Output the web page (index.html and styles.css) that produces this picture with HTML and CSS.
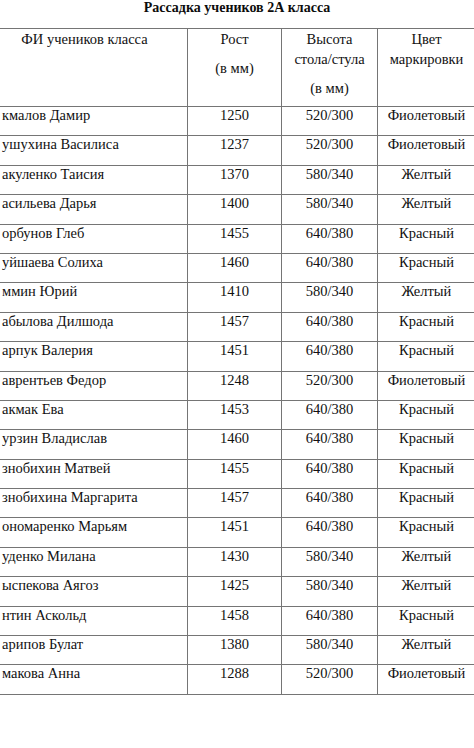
FILE: index.html
```html
<!DOCTYPE html>
<html lang="ru">
<head>
<meta charset="utf-8">
<title>Рассадка учеников 2А класса</title>
<link rel="stylesheet" href="styles.css">
</head>
<body>
<div class="page">
  <h1 class="title">Рассадка учеников 2А класса</h1>
  <table class="seating">
    <colgroup>
      <col class="c-name">
      <col class="c-height">
      <col class="c-desk">
      <col class="c-color">
    </colgroup>
    <thead>
      <tr>
        <th class="name-h"><p>ФИ учеников класса</p></th>
        <th><p>Рост</p><p class="gap">(в мм)</p></th>
        <th><p>Высота<br>стола/стула</p><p class="gap">(в мм)</p></th>
        <th><p>Цвет<br>маркировки</p></th>
      </tr>
    </thead>
    <tbody>
      <tr><td class="name">кмалов Дамир</td><td>1250</td><td>520/300</td><td>Фиолетовый</td></tr>
      <tr><td class="name">ушухина Василиса</td><td>1237</td><td>520/300</td><td>Фиолетовый</td></tr>
      <tr><td class="name">акуленко Таисия</td><td>1370</td><td>580/340</td><td>Желтый</td></tr>
      <tr><td class="name">асильева Дарья</td><td>1400</td><td>580/340</td><td>Желтый</td></tr>
      <tr><td class="name">орбунов Глеб</td><td>1455</td><td>640/380</td><td>Красный</td></tr>
      <tr><td class="name">уйшаева Солиха</td><td>1460</td><td>640/380</td><td>Красный</td></tr>
      <tr><td class="name">ммин Юрий</td><td>1410</td><td>580/340</td><td>Желтый</td></tr>
      <tr><td class="name">абылова Дилшода</td><td>1457</td><td>640/380</td><td>Красный</td></tr>
      <tr><td class="name">арпук Валерия</td><td>1451</td><td>640/380</td><td>Красный</td></tr>
      <tr><td class="name">аврентьев Федор</td><td>1248</td><td>520/300</td><td>Фиолетовый</td></tr>
      <tr><td class="name">акмак Ева</td><td>1453</td><td>640/380</td><td>Красный</td></tr>
      <tr><td class="name">урзин Владислав</td><td>1460</td><td>640/380</td><td>Красный</td></tr>
      <tr><td class="name">знобихин Матвей</td><td>1455</td><td>640/380</td><td>Красный</td></tr>
      <tr><td class="name">знобихина Маргарита</td><td>1457</td><td>640/380</td><td>Красный</td></tr>
      <tr><td class="name">ономаренко Марьям</td><td>1451</td><td>640/380</td><td>Красный</td></tr>
      <tr><td class="name">уденко Милана</td><td>1430</td><td>580/340</td><td>Желтый</td></tr>
      <tr><td class="name">ыспекова Аягоз</td><td>1425</td><td>580/340</td><td>Желтый</td></tr>
      <tr><td class="name">нтин Аскольд</td><td>1458</td><td>640/380</td><td>Красный</td></tr>
      <tr><td class="name">арипов Булат</td><td>1380</td><td>580/340</td><td>Желтый</td></tr>
      <tr><td class="name">макова Анна</td><td>1288</td><td>520/300</td><td>Фиолетовый</td></tr>
    </tbody>
  </table>
</div>
</body>
</html>
```

FILE: styles.css
```css
html, body {
  margin: 0;
  padding: 0;
  background: #ffffff;
}

body {
  width: 474px;
  height: 748px;
  overflow: hidden;
  font-family: "Liberation Serif", "Times New Roman", serif;
  color: #111111;
}

.title {
  margin: 0 0 12px 0;
  font-size: 14px;
  line-height: 16px;
  font-weight: bold;
  text-align: center;
  color: #0c0c0c;
}

.seating {
  border-collapse: collapse;
  table-layout: fixed;
  width: 494px;
  margin-left: -19px;
  font-size: 14.5px;
}

.c-name { width: 206px; }
.c-height { width: 94px; }
.c-desk { width: 96px; }
.c-color { width: 98px; }

.seating th,
.seating td {
  border: 1px solid #757575;
  vertical-align: top;
  text-align: center;
  font-weight: normal;
  padding: 0 2px;
}

.seating th {
  line-height: 20px;
  padding-bottom: 8px;
}

.seating th p {
  margin: 0;
}

.seating th p.gap {
  margin-top: 9px;
}

.seating td {
  line-height: 17px;
  height: 17px;
  padding-bottom: 11.4px;
  white-space: nowrap;
}

.seating td.name {
  text-align: left;
  padding-left: 20px;
}
```
